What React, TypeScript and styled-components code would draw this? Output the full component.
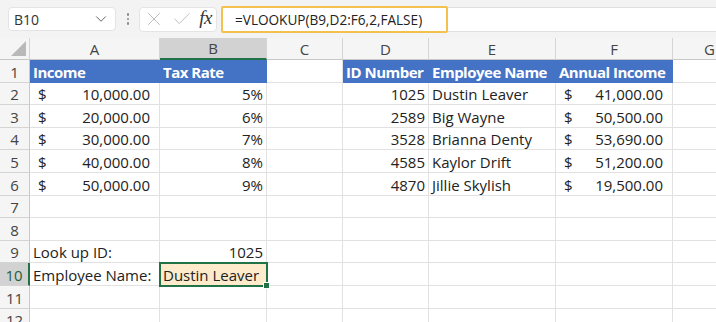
import styled, { createGlobalStyle, css } from "styled-components"
import { ChevronDown, X, Check } from "lucide-react"

const GlobalStyle = createGlobalStyle`
body {
    margin: 0;
    background: #fff;
    font-family: "Open Sans", "Noto Sans", sans-serif;
    overflow: hidden;
}
`

const Toolbar = styled.div`
height: 38px;
background: #f3f3f3;
display: flex;
align-items: center;
padding-left: 8px;
`

const NameBox = styled.div`
width: 108px;
height: 24px;
box-sizing: border-box;
background: #fff;
border-radius: 4px;
border: 1px solid #e4e4e4;
display: flex;
align-items: center;
justify-content: space-between;
padding: 0 5px 0 5px;
font-size: 14px;
color: #333;
`

const Dots = styled.div`
width: 22px;
display: flex;
flex-direction: column;
align-items: center;
gap: 2px;
margin-left: 1px;

span {
    width: 2.5px;
    height: 2.5px;
    border-radius: 50%;
    background: #8a8a8a;
}
`

const FxGroup = styled.div`
width: 78px;
height: 25px;
box-sizing: border-box;
background: #fff;
border-radius: 4px;
border: 1px solid #e4e4e4;
display: flex;
align-items: center;
justify-content: space-between;
padding: 0 4px 0 3px;
`

const Fx = styled.span`
font-family: "Liberation Serif", "DejaVu Serif", serif;
font-style: italic;
font-size: 19px;
color: #333;
letter-spacing: -0.5px;
margin-top: -3px;
`

const FormulaRow = styled.div`
flex: 1;
display: flex;
align-items: center;
margin-left: 4px;
`

const Highlight = styled.div`
width: 227px;
height: 27px;
box-sizing: border-box;
border: 2px solid #f2c14e;
border-radius: 2px;
background: #fff;
display: flex;
align-items: center;
padding-left: 12px;
font-size: 13.6px;
color: #222;
white-space: nowrap;
`

const FormulaRest = styled.div`
flex: 1;
height: 25px;
box-sizing: border-box;
background: #fff;
border-top: 1px solid #e0e0e0;
border-bottom: 1px solid #e0e0e0;
`

const Sheet = styled.div`
display: grid;
grid-template-columns: 30px 130px 107px 76px 86px 127px 117px 74px;
grid-template-rows: 22px repeat(12, 22.6px);
width: max-content;
font-size: 15px;
color: #222;
`

const Corner = styled.div`
background: #f5f5f5;
border-right: 1px solid #d4d4d4;
border-bottom: 1px solid #c8c8c8;
display: flex;
align-items: flex-end;
justify-content: flex-end;
padding: 0 3px 3px 0;
`

const ColHead = styled.div<{ $sel?: boolean }>`
background: ${p => (p.$sel ? "#d2d2d2" : "#f5f5f5")};
border-right: 1px solid #d4d4d4;
border-bottom: ${p => (p.$sel ? "2px solid #217346" : "1px solid #c8c8c8")};
display: flex;
align-items: center;
justify-content: center;
color: #444;
font-size: 15px;
`

const RowHead = styled.div<{ $sel?: boolean }>`
background: ${p => (p.$sel ? "#d2d2d2" : "#f5f5f5")};
border-right: ${p => (p.$sel ? "2px solid #217346" : "1px solid #c8c8c8")};
border-bottom: 1px solid #d4d4d4;
display: flex;
align-items: flex-end;
justify-content: center;
color: ${p => (p.$sel ? "#1e5e3b" : "#444")};
font-size: 15px;
line-height: 20px;
`

const Cell = styled.div<{ $align?: "left" | "right"; $head?: boolean; $sel?: boolean }>`
position: relative;
border-right: 1px solid #e1e1e1;
border-bottom: 1px solid #e1e1e1;
display: flex;
align-items: flex-end;
justify-content: ${p => (p.$align === "right" ? "flex-end" : "flex-start")};
padding: 0 3px 0 3px;
line-height: 20px;
white-space: nowrap;
min-width: 0;

${p =>
    p.$head &&
    css`
        background: #4472c4;
        border-color: #4472c4;
        color: #fff;
        font-weight: 700;
        letter-spacing: -0.5px;
    `}

${p =>
    p.$sel &&
    css`
        background: #fdebcc;
        outline: 2px solid #217346;
        outline-offset: -1px;
        z-index: 1;
        &::after {
            content: "";
            position: absolute;
            right: -4px;
            bottom: -4px;
            width: 5px;
            height: 5px;
            background: #217346;
            border: 1px solid #fff;
        }
    `}
`

const Money = styled(Cell)`
justify-content: space-between;
padding: 0 9px 0 8px;
`

type Row = (string | { t: string; r?: boolean; h?: boolean; m?: boolean; s?: boolean })[]

const head = (t: string) => ({ t, h: true })
const money = (t: string) => ({ t, m: true })
const right = (t: string) => ({ t, r: true })

const rows: Row[] = [
    [head("Income"), head("Tax Rate"), "", head("ID Number"), head("Employee Name"), head("Annual Income"), ""],
    [money("10,000.00"), right("5%"), "", right("1025"), "Dustin Leaver", money("41,000.00"), ""],
    [money("20,000.00"), right("6%"), "", right("2589"), "Big Wayne", money("50,500.00"), ""],
    [money("30,000.00"), right("7%"), "", right("3528"), "Brianna Denty", money("53,690.00"), ""],
    [money("40,000.00"), right("8%"), "", right("4585"), "Kaylor Drift", money("51,200.00"), ""],
    [money("50,000.00"), right("9%"), "", right("4870"), "Jillie Skylish", money("19,500.00"), ""],
    ["", "", "", "", "", "", ""],
    ["", "", "", "", "", "", ""],
    ["Look up ID:", right("1025"), "", "", "", "", ""],
    ["Employee Name:", { t: "Dustin Leaver", s: true }, "", "", "", "", ""],
    ["", "", "", "", "", "", ""],
    ["", "", "", "", "", "", ""],
]

const cols = ["A", "B", "C", "D", "E", "F", "G"]

export const App = () => {
    return (
        <>
            <GlobalStyle />
            <Toolbar>
                <NameBox>
                    <span>B10</span>
                    <ChevronDown size={18} strokeWidth={1.2} color="#555" />
                </NameBox>
                <Dots>
                    <span />
                    <span />
                    <span />
                </Dots>
                <FxGroup>
                    <X size={22} strokeWidth={1} color="#b8b8b8" />
                    <Check size={22} strokeWidth={1} color="#b8b8b8" />
                    <Fx>fx</Fx>
                </FxGroup>
                <FormulaRow>
                    <Highlight>=VLOOKUP(B9,D2:F6,2,FALSE)</Highlight>
                    <FormulaRest />
                </FormulaRow>
            </Toolbar>
            <Sheet>
                <Corner>
                    <svg width="15" height="15" viewBox="0 0 15 15">
                        <polygon points="15,0 15,15 0,15" fill="#b9b9b9" />
                    </svg>
                </Corner>
                {cols.map(c => (
                    <ColHead key={c} $sel={c === "B"}>
                        {c}
                    </ColHead>
                ))}
                {rows.map((row, i) => [
                    <RowHead key={"h" + i} $sel={i === 9}>
                        {i + 1}
                    </RowHead>,
                    ...row.map((v, j) => {
                        const key = i + "-" + j
                        if (typeof v === "string") return <Cell key={key}>{v}</Cell>
                        if (v.m)
                            return (
                                <Money key={key}>
                                    <span>$</span>
                                    <span>{v.t}</span>
                                </Money>
                            )
                        return (
                            <Cell key={key} $align={v.r ? "right" : "left"} $head={v.h} $sel={v.s}>
                                {v.t}
                            </Cell>
                        )
                    }),
                ])}
            </Sheet>
        </>
    )
}

export default App
